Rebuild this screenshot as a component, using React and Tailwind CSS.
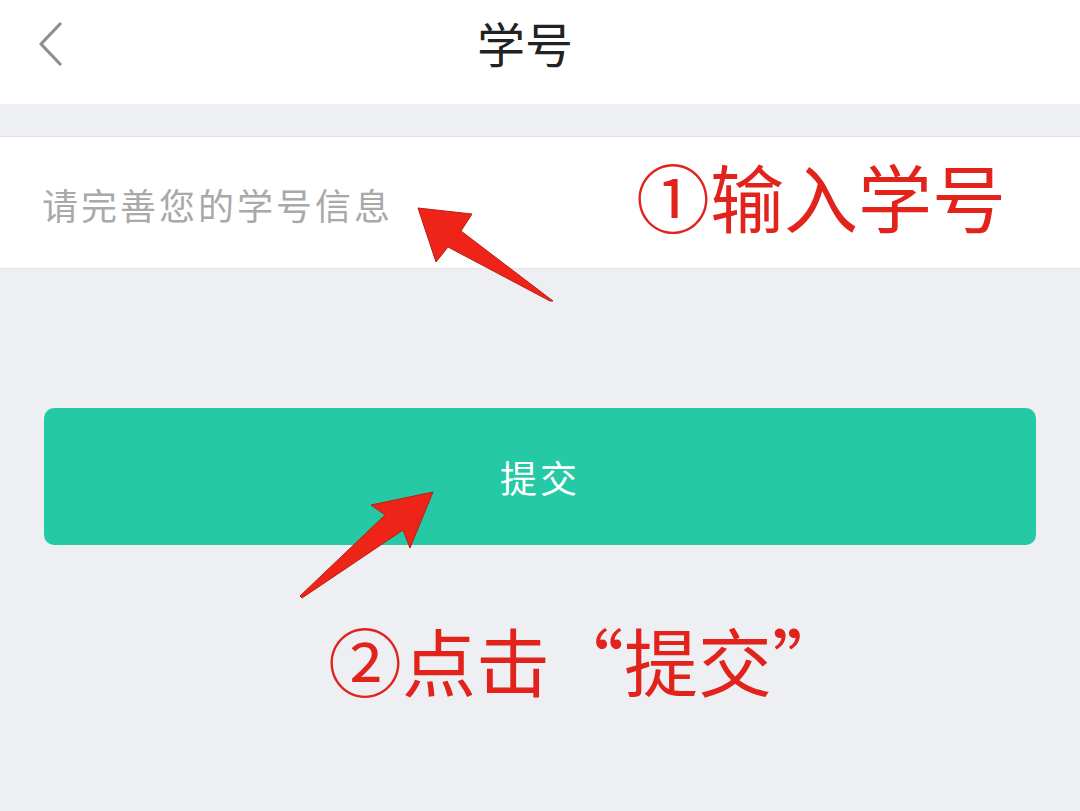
export default function App() {
  const font = { fontFamily: '"Noto Sans CJK SC", "Noto Sans", sans-serif' };
  return (
    <div className="relative w-[1080px] h-[811px] bg-[#eeeff3] overflow-hidden" style={font}>
      <div className="h-[104px] bg-white flex items-center relative">
        <svg className="absolute left-[36px] top-[22px]" width="30" height="44" viewBox="0 0 30 44">
          <path d="M24 2 L5 22 L24 42" fill="none" stroke="#8e8e8e" strokeWidth="3.2" strokeLinecap="round" strokeLinejoin="round" />
        </svg>
        <div className="flex-1 text-center text-[48px] text-[#222] leading-none -translate-x-[15px] -translate-y-[10px]">学号</div>
      </div>
      <div className="h-[32px]" />
      <div className="h-[133px] bg-white border-y border-[#e2e3e6] flex items-center pl-[42px]">
        <span className="text-[36px] text-[#a9a9a9] leading-none tracking-[3px] translate-y-[1px]">请完善您的学号信息</span>
      </div>
      <div className="px-[44px] pt-[139px]">
        <div className="h-[137px] rounded-[10px] bg-[#25c9a6] flex items-center justify-center">
          <span className="text-[37px] text-white leading-none tracking-[3px] translate-y-[1px]">提交</span>
        </div>
      </div>

      <div className="absolute left-[636px] top-[158px] text-[74px] leading-none text-[#e2231c] whitespace-nowrap">①输入学号</div>
      <div className="absolute left-[328px] top-[622px] text-[74px] leading-none text-[#e2231c] whitespace-nowrap">②点击“提交”</div>

      <svg className="absolute left-0 top-0 pointer-events-none" width="1080" height="811" viewBox="0 0 1080 811">
        <polygon points="418,208 472,214 461,231 553,301 550,301 448,247 436,262" fill="#ee2418" stroke="#b82014" strokeWidth="1" strokeLinejoin="round" />
        <polygon points="433,492 410,548 403,530 302,598 300,596 385,515 371,505" fill="#ee2418" stroke="#b82014" strokeWidth="1" strokeLinejoin="round" />
      </svg>
    </div>
  );
}
